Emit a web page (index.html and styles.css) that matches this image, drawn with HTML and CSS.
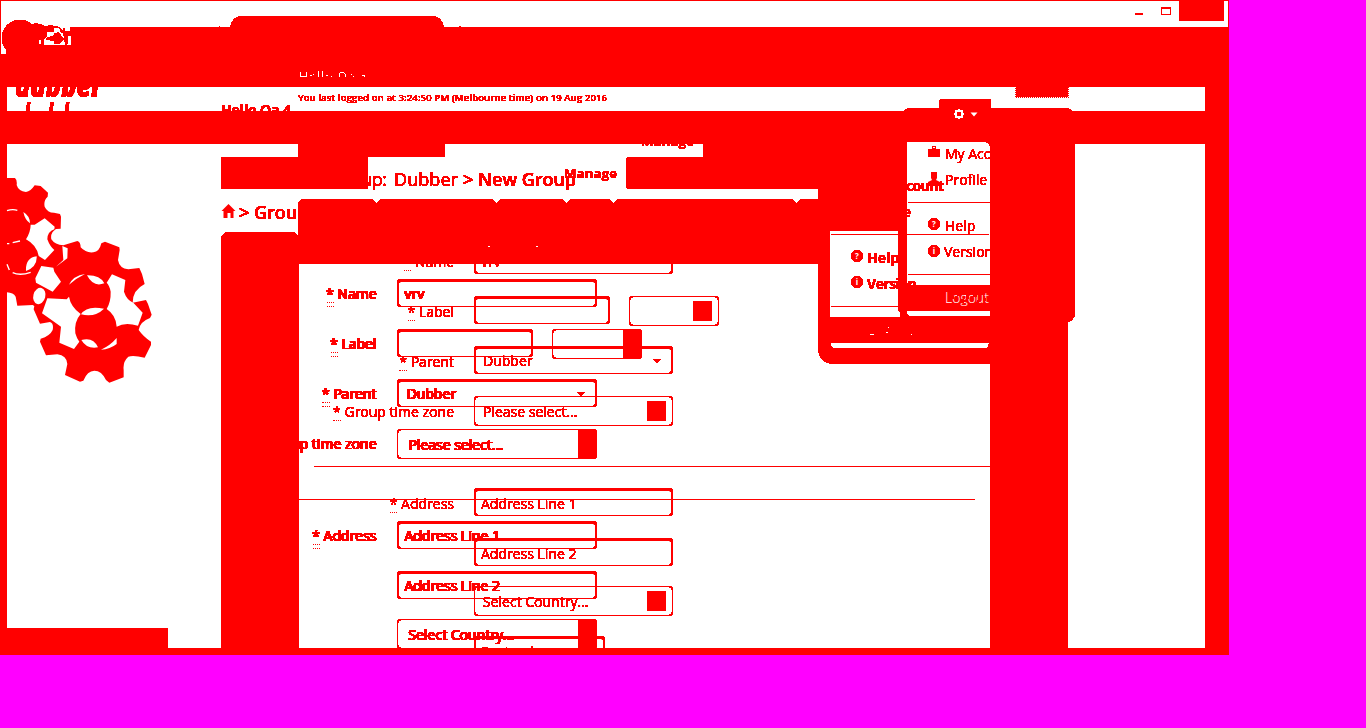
FILE: index.html
```html
<!DOCTYPE html>
<html lang="en">
<head>
<meta charset="utf-8">
<title>Dubber - New Group</title>
<link rel="stylesheet" href="styles.css">
</head>
<body>
<main class="screen">
  <header class="titlebar"></header>
  <div class="toolbar"></div>
  <div class="greeting-strip"></div>
  <div class="nav-band"></div>
  <div class="page-body"></div>

  <svg class="artwork" width="1229" height="655" viewBox="0 0 1229 655" fill="#f00">
    <defs>
      <filter id="crisp" x="0" y="0" width="1" height="1" color-interpolation-filters="sRGB"><feComponentTransfer><feFuncA type="linear" slope="30" intercept="-2"/></feComponentTransfer></filter>
      <clipPath id="strip"><path d="M7 87H1205V111H7z"/></clipPath>
      <clipPath id="body"><path d="M7 144H1205V648H7z"/></clipPath>
      <clipPath id="crumb"><path d="M368 144H800V200H368z"/></clipPath>
      <clipPath id="home"><path d="M221 195H298V230H221z"/></clipPath>
      <clipPath id="menu"><path d="M830 144H990V311H830z"/></clipPath>
    </defs>
    <!-- window controls and browser tab -->
    <g shape-rendering="crispEdges">
      <path d="M1135 13h8v2h-8zM1179 0h45v21h-45z"/>
      <path fill-rule="evenodd" d="M1161 7h10v8h-10zM1162 9v5h8v-5z"/>
      <path d="M230 27Q232 17 240 16H434Q442 17 444 27zM219 26h1v1h-1zM459 26h2v1h-2z"/>
      <path fill="#fff" d="M1 27h30v8H1zM1 35h5v19H1z"/>
      <circle cx="20" cy="38" r="18.5"/>
      <path d="M6 45h34v10H6zM29 25Q38 21 45 26L49 35H29z"/>
      <path fill="#fff" d="M39 40h2v4h-2zM47 29L56 27 61 30 64 36 66 40V45H44V40L47 36zM67 36h4v9h-4zM57 27h13v4H60z"/>
      <path d="M45 26Q55 24 61 28L66 36 67 45H65L63 33 58 28 54 28V33L59 32 64 39 60 44H54V41L46 40V38L54 35V32L47 32zM59 28h2l2 5h-2zM63 28h2v5h-2zM66 31h4v4h-3zM67 36h1v8h-1z"/>
    </g>
    <g clip-path="url(#strip)"><g class="crisp">
      <text class="logo" x="15" y="97" textLength="87" lengthAdjust="spacingAndGlyphs">dubber</text>
      <text class="logo tall" x="14" y="140" textLength="88" lengthAdjust="spacingAndGlyphs">dubber</text>
      <text class="hello" x="221" y="114.500" textLength="70">Hello Qa 4</text>
      <text class="login" x="298" y="101" textLength="309">You last logged on at 3:24:50 PM (Melbourne time) on 19 Aug 2016</text>
    </g></g>
    <path fill="none" stroke="#fff" d="M300.500 72v4h6v-4M318.500 71v6M322.500 71v6M339 77v-3q3-4 6 0v3" shape-rendering="crispEdges"/>
    <path fill="#fff" d="M310 75h2v1h-2zm3-1h1v1h-1zm13 1h2v1h-2zm5 1h1v1h-1zm20-2h1v1h-1zm2 2h1v1h-1zm9-1h3v2h-1v-1h-2z"/>
    <!-- blocks -->
    <g shape-rendering="crispEdges">
      <path d="M298 144h147v13H298z"/>
      <rect x="221" y="157" width="147" height="32" rx="1"/>
      <path d="M703 144h115v13H703zM627 157h191v32H627l-1-1v-30z"/>
      <path d="M221 236l4-4h70l3 4v3h1v409h-78z"/>
      <path d="M298 202l3-3h71l4 4 4-4h112l4 4 4-4h62l4 4 4-4h39l4 4 4-4h175l4 4 4-4h18v65H299v-24h-1z"/>
      <path d="M818 144H990V364H834Q818 364 818 348z"/>
      <path d="M990 144h78v504h-78zM1068 144h7v172l-3 5-4 1zM904 111q1-3 6-3h155q6 0 7 3z"/>
      <path d="M939 112V100l1-1h50l1 1v12z"/>
      <path d="M1015 87h54v11h-54z"/>
      <path fill="#fff" d="M830 231h68v80l2 2v4h-70zM831 343h158l-2 5H834l-3-2zM907 142h78q4 1 5 5v138h-83zM907 311h83v5h-80l-3-2z"/>
      <path d="M908 202h82v1h-82zM831 234h158v1H831zM908 274h82v1h-82zM831 306h67v1h-67z"/>
      <path d="M7 628h161v20H7z"/>
    </g>
    <path d="M1015.500 87v10.500h53v-10.500" fill="none" stroke="#fff" stroke-dasharray="1 1" shape-rendering="crispEdges"/>
    <path fill="none" stroke="#fff" stroke-width="2" d="M956 111h6v6h-6z"/>
    <path fill="#fff" d="M958 109h2v2h-2zM958 117h2v2h-2zM954 113h2v2h-2zM962 113h2v2h-2zM970.500 112.500h7l-3.500 4z"/>
    <path fill="#fff" d="M488 246h2v1h-2zM536 246h2v1h-2z"/>
    <!-- page labels -->
    <g clip-path="url(#body)"><g class="crisp">
      <text class="manage" x="641" y="146" textLength="53">Manage</text>
      <text class="manage" x="564" y="178" textLength="53">Manage</text>
    </g></g>
    <g clip-path="url(#crumb)"><g class="crisp"><text class="crumb" y="186"><tspan x="331" textLength="56">Group:</tspan><tspan x="394" textLength="64">Dubber</tspan><tspan class="strong" x="463">&gt;</tspan><tspan class="strong" x="478" textLength="98">New Group</tspan></text></g></g>
    <g clip-path="url(#home)"><g class="crisp"><text class="crumb strong" y="219"><tspan x="239">&gt;</tspan><tspan x="254">Group:</tspan></text></g></g>
    <path d="M228.500 204l7 7h-2v7h-3v-5h-3v5h-4v-7h-2z"/>
    <!-- account menus -->
    <g clip-path="url(#menu)"><g class="crisp menu">
      <text x="945" y="159">My Account</text><text x="945" y="185">Profile</text><text x="945" y="231">Help</text><text x="944" y="257">Version</text>
      <g class="semi"><text x="867" y="191" textLength="77">My Account</text><text x="867" y="217" textLength="44">Profile</text><text x="867" y="263" textLength="32">Help</text><text x="867" y="289" textLength="50">Version</text></g>
    </g>
      <text class="logout" x="945" y="303">Logout</text>
      <path d="M951 296h3v3h-3zM957 294h4v2h-4zM961 299h3v4h-3zM966 294h3v5h-3zM973 294h4v3h-4zM977 300h2v3h-2zM983 298h3v3h-3z"/>
    </g>
    <path d="M928 149h4v-3h4v3h4v8h-12zM931 172h6v6l-1 2 4 2v4h-12v-4l4-2-1-2z"/>
    <path fill="#fff" d="M933 147h2v1h-2z"/>
    <g shape-rendering="crispEdges"><circle cx="934" cy="224" r="6.300"/><circle cx="934" cy="251" r="6.300"/><circle cx="857" cy="256" r="6.300"/><circle cx="857" cy="282" r="6.300"/></g>
    <g class="glyph"><text x="934" y="227">?</text><text x="934" y="254">i</text><text x="857" y="259">?</text><text x="857" y="285">i</text></g>
    <path fill="#fff" d="M870 334h4v1h-4zM886 332h2v1h-2zM888 327h1v1h-1zM911 334h1v1h-1z"/>
    <!-- gears -->
    <g transform="translate(0 160) scale(.33333)">
      <path d="M21 54H45Q52 60 50 75 55 93 78 96 92 94 104 76L122 78 144 98 143 110Q130 122 134 140 142 158 162 158L180 162 183 170 182 206 168 207Q150 218 154 238 165 255 190 256L232 243Q242 246 242 262 258 280 280 277 298 276 304 250L315 245 358 262 359 270 354 300Q358 325 385 328L418 324 426 342 434 372Q398 390 398 428L438 420 444 432 455 464 450 474Q420 485 416 510 430 530 453 545L453 555 434 593Q400 585 385 590 368 605 371 630V652L328 668 318 660Q305 632 283 632 262 632 250 662L240 665 195 645 202 612Q200 586 172 583L138 586 120 545 122 536Q150 528 158 510 162 490 150 486L120 491 101 448 103 438 98 435 52 437 47 410Q40 398 21 397z"/>
      <g fill="#fff">
        <path d="M134 175L164 200 163 208Q142 215 142 238 150 260 163 270L135 300 116 288Q110 255 78 238 92 215 92 194L104 194z"/>
        <path d="M124 318L160 323 163 335 183 365 158 395 108 368 106 355z"/>
        <ellipse cx="118" cy="408" rx="18" ry="25" transform="rotate(15 118 408)"/>
        <path d="M142 415L200 418 207 410Q212 440 242 462 222 485 226 520 230 535 238 545L222 567 178 548 183 500 160 484 126 460z"/>
        <path d="M336 343L376 360 372 395Q380 420 400 428L428 458 414 497Q375 485 350 500 348 465 320 447 333 425 332 395 328 375 320 368z"/>
        <path d="M261 346Q300 345 313 370 280 383 261 346zM243 463Q260 435 312 446 285 473 243 463zM244 540Q280 530 294 562 260 568 244 540zM78 333Q76 293 110 289 112 320 78 333zM70 156Q90 168 90 190 75 180 70 156zM187 258L203 265 202 295 168 320 190 300zM207 374Q220 347 255 342 228 355 207 374zM303 569Q330 557 350 534V552Q330 568 303 569z"/>
        <path fill="none" stroke="#fff" stroke-width="4" d="M21 152Q38 146 52 151M21 251H28M38 248L60 243M21 313L28 330M38 338Q60 348 92 337"/>
      </g>
    </g>
  </svg>

  <div class="viewport">
    <form class="form form-back">
      <div class="row"><label><i>*</i> Name</label><span class="input">vrv</span></div>
      <div class="row"><label><i>*</i> Label</label><span class="input short"></span><span class="select small"><b></b></span></div>
      <div class="row"><label><i>*</i> Parent</label><span class="input combo">Dubber<em></em></span></div>
      <div class="row"><label><i>*</i> Group time zone</label><span class="select">Please select...<b></b></span></div>
      <div class="rule"></div>
      <div class="row"><label><i>*</i> Address</label><span class="input">Address Line 1</span></div>
      <div class="row"><label></label><span class="input">Address Line 2</span></div>
      <div class="row lift"><label></label><span class="select">Select Country...<b></b></span></div>
      <div class="row lift"><label></label><span class="input short code">Postcode</span></div>
    </form>
    <form class="form form-front">
      <div class="row"><label><i>*</i> Name</label><span class="input">vrv</span></div>
      <div class="row"><label><i>*</i> Label</label><span class="input short"></span><span class="select small"><b></b></span></div>
      <div class="row"><label><i>*</i> Parent</label><span class="input combo">Dubber<em></em></span></div>
      <div class="row"><label><i>*</i> Group time zone</label><span class="select">Please select...<b></b></span></div>
      <div class="rule"></div>
      <div class="row"><label><i>*</i> Address</label><span class="input">Address Line 1</span></div>
      <div class="row"><label></label><span class="input">Address Line 2</span></div>
      <div class="row lift"><label></label><span class="select">Select Country...<b></b></span></div>
    </form>
  </div>
</main>
</body>
</html>
```

FILE: styles.css
```css
* { box-sizing: border-box; }
body { margin: 0; width: 1366px; height: 728px; overflow: hidden; background: #f0f; font-family: "Open Sans", sans-serif; }

.screen { position: relative; display: flex; flex-direction: column; width: 1229px; height: 655px; padding: 1px 0 7px; background: #f00; color: #f00; }
.titlebar { height: 26px; margin: 0 1px; background: #fff; }
.toolbar { height: 60px; }
.greeting-strip { height: 24px; margin: 0 24px 0 7px; background: #fff; }
.nav-band { height: 33px; }
.page-body { flex: 1; margin: 0 24px 0 7px; background: #fff; }

.artwork { position: absolute; left: 0; top: 0; font-family: "Open Sans", sans-serif; }
.crisp { filter: url(#crisp); }
.logo { font-size: 34px; font-weight: 800; font-style: italic; }
.tall { font-size: 50px; font-weight: 600; }
.hello { font-size: 14px; font-weight: 700; }
.login { font-size: 9.500px; font-weight: 600; }
.manage { font-size: 13px; font-weight: 700; }
.crumb { font-size: 18px; }
.strong { font-weight: 600; }
.menu { font-size: 14px; }
.semi { font-weight: 700; }
.logout { fill: #fff; font-size: 14px; font-weight: 300; }
.glyph { fill: #fff; font-size: 8px; font-weight: 700; text-anchor: middle; }

/* the two overlapping forms share one clipped window */
.viewport { position: absolute; left: 299px; top: 264px; width: 691px; height: 384px; overflow: hidden; }
.form { position: absolute; width: 760px; filter: url(#crisp); }
.form-back { left: 15px; top: -18px; }
.form-front { left: -62px; top: 15px; }
.row { display: flex; align-items: flex-start; height: 50px; font-size: 14px; line-height: 30px; }
.row label { width: 140px; margin-right: 20px; text-align: right; white-space: nowrap; }
.form-back label { padding-top: 1px; }
.row i { display: inline-block; line-height: 17px; font-style: normal; border-bottom: 1px dotted; }
.rule { height: 1px; margin: 20px 0 21px; width: 738px; background: #f00; }
.input, .select { display: flex; align-items: center; flex: none; width: 199px; border: 1px solid; border-radius: 4px; white-space: nowrap; }
.input { height: 28px; border-width: 3px 2px 1px; padding: 1px 11px 0 5px; justify-content: space-between; }
.form-back .combo { padding-left: 7px; padding-top: 0; }
.select { height: 30px; padding: 0 6px 0 8px; justify-content: space-between; }
.form-back .input { padding-top: 2px; }
.form-back .combo { padding-top: 0; padding-right: 10px; }
.form-back .select { padding-top: 1px; }
.form-back .select b { margin-top: -1px; }
.form-front .input, .form-front .select { width: 200px; }
.form-front .input { padding: 0 10px 0 6px; }
.form-front .combo { padding-left: 8px; }
.input.short { width: 136px; }
.form .select.small { width: 90px; margin-left: 19px; }
.form .input.short { width: 136px; }
.form .input.code { width: 131px; }
.select b { width: 19px; height: 20px; margin-left: auto; background: #f00; }
.input em { border: 4px solid transparent; border-top-color: #f00; border-bottom: 0; }
.lift .input, .lift .select { margin-top: -2px; }
.form-front .row { text-shadow: -1px 0 #f00; }
.form-front .row i { position: relative; }
.form-front .row i::after { content: ""; position: absolute; left: 0; right: 0; bottom: -5px; border-bottom: 1px dotted; }
.form-front .select { padding: 1px 0 0 11px; }
.form-front .select b { width: 18px; height: 28px; margin: -1px 0 0; }
.form-front .small b { margin-left: auto; }
```
